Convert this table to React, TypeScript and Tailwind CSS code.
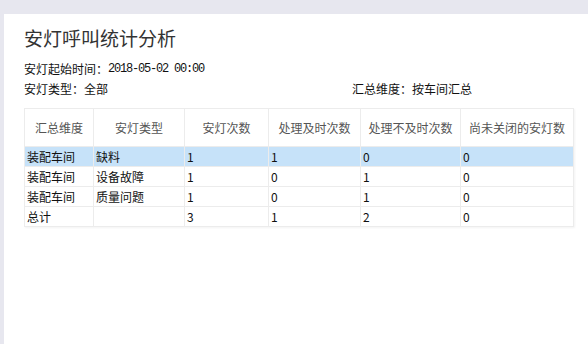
import React from "react";

const cjk = { fontFamily: '"Noto Sans CJK SC", "Noto Sans", sans-serif' };
const mono = { fontFamily: '"Liberation Mono", "Noto Sans CJK SC", monospace' };

const columns = [
  { label: "汇总维度", w: "w-[69px]" },
  { label: "安灯类型", w: "w-[91px]" },
  { label: "安灯次数", w: "w-[84px]" },
  { label: "处理及时次数", w: "w-[92px]" },
  { label: "处理不及时次数", w: "w-[100px]" },
  { label: "尚未关闭的安灯数", w: "w-[113px]" },
];

const rows = [
  ["装配车间", "缺料", "1", "1", "0", "0"],
  ["装配车间", "设备故障", "1", "0", "1", "0"],
  ["装配车间", "质量问题", "1", "0", "1", "0"],
  ["总计", "", "3", "1", "2", "0"],
];

export default function App() {
  return (
    <div className="h-[344px] w-[588px] overflow-hidden bg-[#e7e7ef] pl-[4px] pt-[14px]" style={cjk}>
      <div className="h-full bg-white pl-[20px] pt-[12px] text-[12px] text-[#111]">
        <h1 className="text-[19px] leading-[24px] text-[#333]">安灯呼叫统计分析</h1>

        <div className="mt-[9px] flex h-[20px] items-center">
          <span>安灯起始时间：</span>
          <span className="tracking-[-1.2px]" style={mono}>2018-05-02 00:00</span>
        </div>
        <div className="flex h-[20px] items-center">
          <span className="w-[328px]">安灯类型：全部</span>
          <span>汇总维度：按车间汇总</span>
        </div>

        <table className="mt-[9px] w-[549px] table-fixed border-collapse border border-[#ececec] shadow-[1px_1px_2px_rgba(0,0,0,0.05)]">
          <thead>
            <tr className="h-[38px]">
              {columns.map((c) => (
                <th
                  key={c.label}
                  className={`${c.w} border border-[#ececec] p-0 text-center text-[12px] font-normal text-[#555]`}
                >
                  {c.label}
                </th>
              ))}
            </tr>
          </thead>
          <tbody>
            {rows.map((r, i) => (
              <tr key={i} className={`h-[20px] ${i === 0 ? "bg-[#c6e2f9]" : ""}`}>
                {r.map((cell, j) => (
                  <td
                    key={j}
                    className="border border-[#ececec] px-[2px] py-0 text-left text-[12px] leading-[19px] text-[#111]"
                  >
                    {cell}
                  </td>
                ))}
              </tr>
            ))}
          </tbody>
        </table>
      </div>
    </div>
  );
}
